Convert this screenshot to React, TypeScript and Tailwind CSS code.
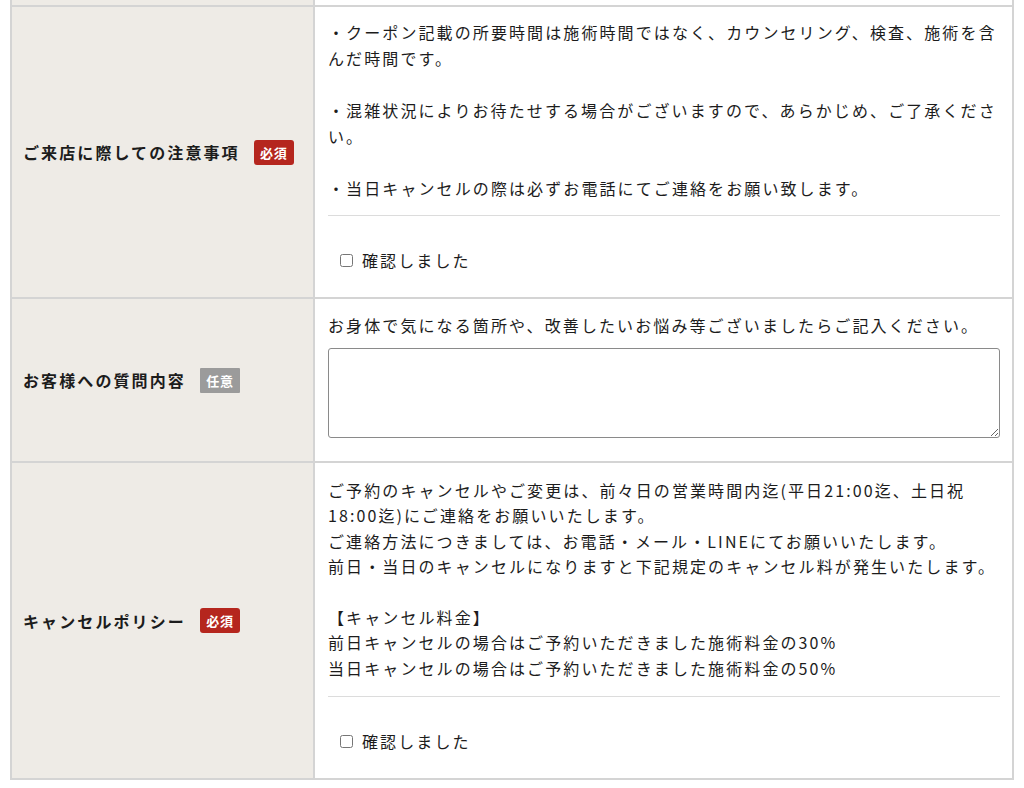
import React from "react";

const B = "border-[#d4d4d4]";

function Badge({ kind }: { kind: "req" | "opt" }) {
  if (kind === "req") {
    return (
      <span className="ml-[14px] inline-flex h-[25px] w-[40px] items-center justify-center rounded-[3px] bg-[#b5261e] text-[13px] font-bold leading-none tracking-[0.05em] text-white">
        必須
      </span>
    );
  }
  return (
    <span className="ml-[14px] inline-flex h-[25px] w-[40px] items-center justify-center rounded-[1px] bg-[#9b9b9b] text-[13px] font-bold leading-none tracking-[0.05em] text-white">
      任意
    </span>
  );
}

function Label({ text, kind }: { text: string; kind: "req" | "opt" }) {
  return (
    <div className={`flex w-[303px] shrink-0 items-center border-r-2 ${B} bg-[#eeebe6] pl-[11px]`}>
      <span className="text-[16px] font-bold tracking-[2.1px]">{text}</span>
      <Badge kind={kind} />
    </div>
  );
}

function Confirm() {
  return (
    <>
      <div className="h-px bg-[#dcdcdc]" />
      <label className="flex items-center pl-[12px] pt-[31px] pb-[24px] leading-[26px]">
        <input type="checkbox" className="m-0 h-[13px] w-[13px]" />
        <span className="ml-[9px] tracking-[2.1px]">確認しました</span>
      </label>
    </>
  );
}

export default function App() {
  return (
    <div className="min-h-[788px] bg-white pl-[10px] font-['Noto_Sans_CJK_JP','Noto_Sans',sans-serif] text-[16px] text-[#1c1c1c]">
      <div className={`w-[1004px] border-x-2 border-b-2 ${B}`}>
        <div className="flex h-[5px]">
          <div className={`w-[303px] shrink-0 border-r-2 ${B} bg-[#eeebe6]`} />
          <div className="flex-1 bg-white" />
        </div>

        <div className={`flex border-t-2 ${B}`}>
          <Label text="ご来店に際しての注意事項" kind="req" />
          <div className="flex-1 bg-white pl-[13px] pr-[12px] pt-[12px]">
            <div className="leading-[26px] tracking-[2.1px]">
              <p>・クーポン記載の所要時間は施術時間ではなく、カウンセリング、検査、施術を含んだ時間です。</p>
              <p>&nbsp;</p>
              <p>・混雑状況によりお待たせする場合がございますので、あらかじめ、ご了承ください。</p>
              <p>&nbsp;</p>
              <p>・当日キャンセルの際は必ずお電話にてご連絡をお願い致します。</p>
            </div>
            <div className="mt-[14px]">
              <Confirm />
            </div>
          </div>
        </div>

        <div className={`flex border-t-2 ${B}`}>
          <Label text="お客様への質問内容" kind="opt" />
          <div className="flex-1 bg-white pl-[13px] pr-[12px] pt-[13px] pb-[23px]">
            <p className="leading-[26px] tracking-[2.1px]">お身体で気になる箇所や、改善したいお悩み等ございましたらご記入ください。</p>
            <textarea className="mt-[10px] block h-[90px] w-full rounded-[3px] border border-[#8a8a8a] bg-white p-[4px]" />
          </div>
        </div>

        <div className={`flex border-t-2 ${B}`}>
          <Label text="キャンセルポリシー" kind="req" />
          <div className="flex-1 bg-white pl-[13px] pr-[12px] pt-[15px]">
            <div className="leading-[25.4px] tracking-[2.1px]">
              <p>ご予約のキャンセルやご変更は、前々日の営業時間内迄(平日21:00迄、土日祝18:00迄)にご連絡をお願いいたします。</p>
              <p>ご連絡方法につきましては、お電話・メール・LINEにてお願いいたします。</p>
              <p>前日・当日のキャンセルになりますと下記規定のキャンセル料が発生いたします。</p>
              <p>&nbsp;</p>
              <p>【キャンセル料金】</p>
              <p>前日キャンセルの場合はご予約いただきました施術料金の30%</p>
              <p>当日キャンセルの場合はご予約いただきました施術料金の50%</p>
            </div>
            <div className="mt-[15px]">
              <Confirm />
            </div>
          </div>
        </div>
      </div>
    </div>
  );
}
